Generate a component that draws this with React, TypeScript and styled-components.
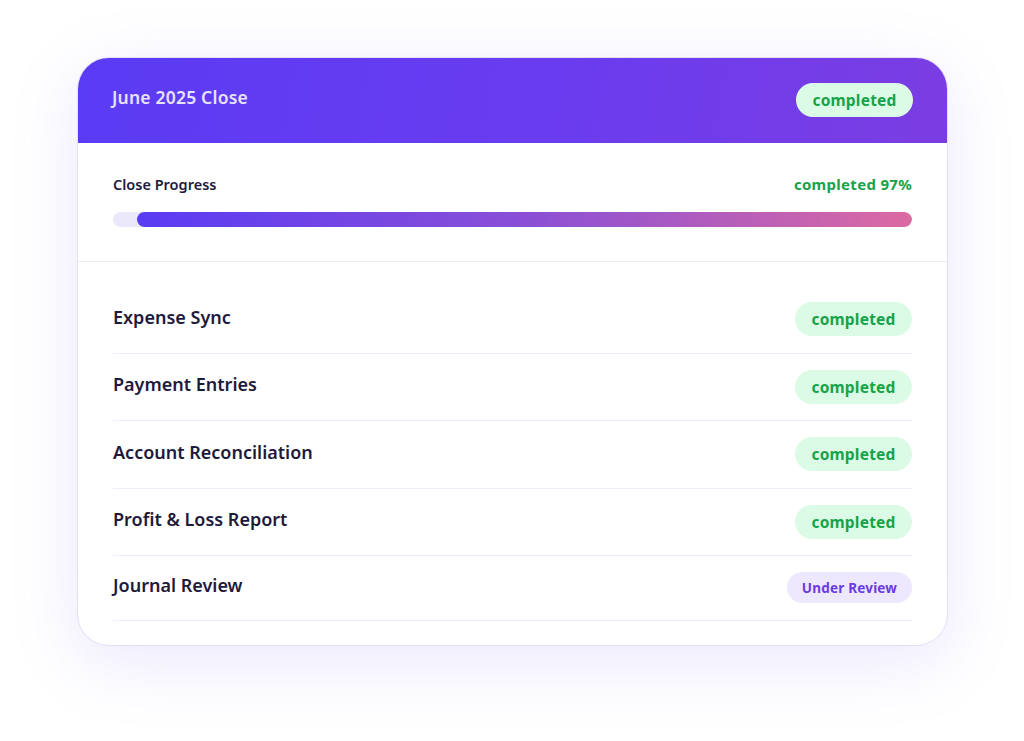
import styled, { createGlobalStyle } from 'styled-components';

const GlobalStyle = createGlobalStyle`
  html, body {
    margin: 0;
    padding: 0;
    background: #ffffff;
    font-family: 'Noto Sans', 'Open Sans', sans-serif;
  }
`;

type Status = 'completed' | 'review';

interface ITask {
  name: string;
  status: Status;
}

const tasks: ITask[] = [
  { name: 'Expense Sync', status: 'completed' },
  { name: 'Payment Entries', status: 'completed' },
  { name: 'Account Reconciliation', status: 'completed' },
  { name: 'Profit & Loss Report', status: 'completed' },
  { name: 'Journal Review', status: 'review' },
];

const progress = 97;

export default function App() {
  return (
    <Page>
      <GlobalStyle />
      <Card>
        <Header>
          <HeaderTitle>June 2025 Close</HeaderTitle>
          <Badge status="completed">completed</Badge>
        </Header>
        <ProgressSection>
          <ProgressTop>
            <ProgressLabel>Close Progress</ProgressLabel>
            <ProgressValue>completed {progress}%</ProgressValue>
          </ProgressTop>
          <Track>
            <Fill style={{ width: `${progress}%` }} />
          </Track>
        </ProgressSection>
        <TaskList>
          {tasks.map((task) => (
            <TaskRow key={task.name}>
              <TaskName>{task.name}</TaskName>
              <Badge status={task.status}>
                {task.status === 'review' ? 'Under Review' : 'completed'}
              </Badge>
            </TaskRow>
          ))}
        </TaskList>
      </Card>
    </Page>
  );
}

const Page = styled.div`
  min-height: 741px;
  box-sizing: border-box;
  padding: 57px 0 0 77px;
  display: flex;
  align-items: flex-start;
`;

const Card = styled.div`
  width: 871px;
  box-sizing: border-box;
  background: #ffffff;
  border: 1px solid #e4defb;
  border-radius: 32px;
  overflow: hidden;
  box-shadow: 0 16px 70px rgba(110, 90, 240, 0.14);
`;

const Header = styled.div`
  height: 86px;
  box-sizing: border-box;
  padding: 0 35px;
  display: flex;
  align-items: center;
  justify-content: space-between;
  background: linear-gradient(100deg, #5a3bf4 0%, #6a3cef 55%, #7b3de2 100%);
  margin: -1px -1px 0;
`;

const HeaderTitle = styled.h1`
  margin: -6px 0 0;
  font-size: 17.5px;
  font-weight: 600;
  color: #e7e2ff;
  letter-spacing: 0.2px;
`;

const Badge = styled.span<{ status: Status }>`
  display: inline-flex;
  align-items: center;
  justify-content: center;
  box-sizing: border-box;
  border-radius: 999px;
  font-weight: 700;
  white-space: nowrap;
  height: ${({ status }) => (status === 'review' ? '31px' : '34px')};
  width: ${({ status }) => (status === 'review' ? '125px' : '117px')};
  font-size: ${({ status }) => (status === 'review' ? '13.5px' : '15.5px')};
  background: ${({ status }) => (status === 'review' ? '#ede8fe' : '#dcfbe6')};
  color: ${({ status }) => (status === 'review' ? '#6c3ae2' : '#17a34a')};
  letter-spacing: 0.2px;
`;

const ProgressSection = styled.div`
  padding: 31px 35px 34px;
  border-bottom: 1px solid #eeebf8;
  display: flex;
  flex-direction: column;
  gap: 18px;
`;

const ProgressTop = styled.div`
  display: flex;
  align-items: center;
  justify-content: space-between;
  height: 20px;
`;

const ProgressLabel = styled.span`
  font-size: 14.5px;
  font-weight: 600;
  color: #1e1a3b;
`;

const ProgressValue = styled.span`
  font-size: 15px;
  font-weight: 700;
  color: #17a34a;
  letter-spacing: 0.3px;
`;

const Track = styled.div`
  height: 15px;
  border-radius: 999px;
  background: #ece8fb;
  display: flex;
  justify-content: flex-end;
  overflow: hidden;
`;

const Fill = styled.div`
  height: 100%;
  border-radius: 999px;
  background: linear-gradient(90deg, #5a3bf4 0%, #8a4fd6 50%, #dc6aa2 100%);
`;

const TaskList = styled.div`
  padding: 24px 35px 24px;
  display: flex;
  flex-direction: column;
`;

const TaskRow = styled.div`
  display: flex;
  align-items: center;
  justify-content: space-between;
  padding: 16.25px 0;
  border-bottom: 1px solid #efecfb;
`;

const TaskName = styled.span`
  font-size: 18px;
  font-weight: 600;
  color: #1e1a3b;
  margin-top: -5px;
`;
